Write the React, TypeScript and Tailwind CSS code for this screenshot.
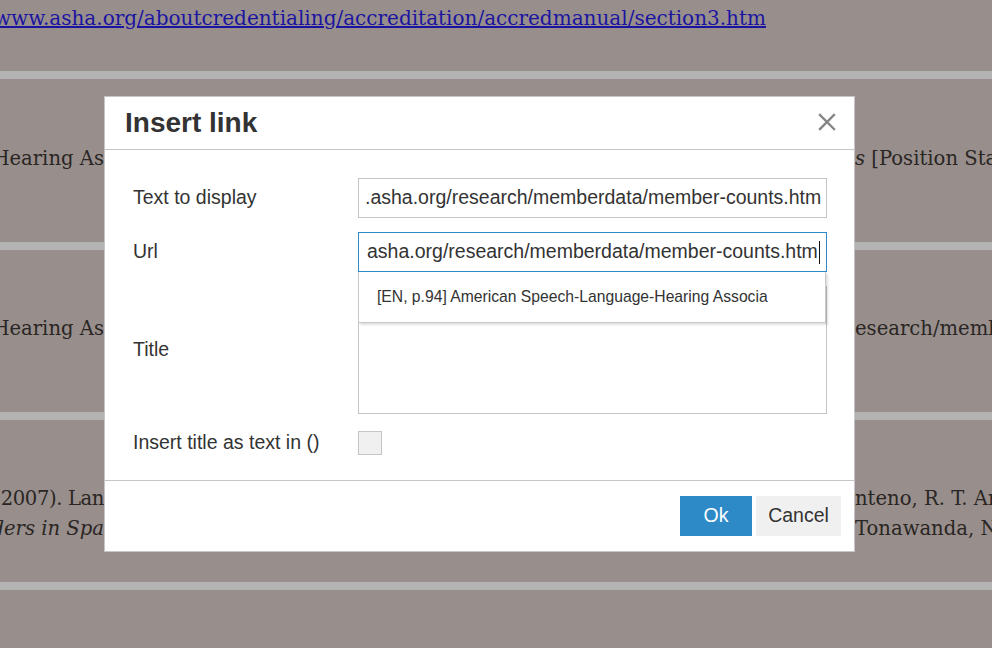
import { ReactNode } from "react";

const serif = { fontFamily: '"DejaVu Serif", "Liberation Serif", serif' };
const sans = { fontFamily: '"Liberation Sans", Arial, sans-serif' };

function Bar() {
  return <div className="h-2 bg-[#b3b3b3]" />;
}

function Line({ left, right }: { left: ReactNode; right: ReactNode }) {
  return (
    <div className="flex h-[30px] items-center whitespace-nowrap leading-[30px]">
      <div className="flex w-[104px] shrink-0 justify-end overflow-hidden">
        <span>{left}</span>
      </div>
      <div className="w-[751px] shrink-0" />
      <div className="min-w-0 overflow-hidden">{right}</div>
    </div>
  );
}

function Page() {
  return (
    <div className="text-[19.6px] text-[#2a2623]" style={serif}>
      <div className="h-[71px] pt-[3px] text-[20px]">
        <div className="flex w-[766px] justify-end overflow-hidden whitespace-nowrap leading-[30px]">
          <span className="text-[#1b14a0] underline">
            http://www.asha.org/aboutcredentialing/accreditation/accredmanual/section3.htm
          </span>
        </div>
      </div>
      <Bar />
      <div className="h-[163px] pt-[65px]">
        <Line
          left="Speech-Language-Hearing As"
          right={
            <>
              <i>s</i> [Position Statement]
            </>
          }
        />
      </div>
      <Bar />
      <div className="h-[162px] pt-[64px]">
        <Line
          left="Speech-Language-Hearing As"
          right="esearch/memberdata/member-counts.htm"
        />
      </div>
      <Bar />
      <div className="h-[162px] pt-[64px]">
        <Line
          left={<span className="tracking-[-0.4px]">Hammer, C. S. (2007). Lan</span>}
          right="nteno, R. T. Anderson"
        />
        <Line
          left={<i>Language Disorders in Spa</i>}
          right="Tonawanda, NY: Multilingual"
        />
      </div>
      <Bar />
    </div>
  );
}

function Field({ label, children }: { label: string; children: ReactNode }) {
  return (
    <div className="flex items-center">
      <div className="w-[225px] shrink-0">{label}</div>
      <div className="min-w-0 flex-1">{children}</div>
    </div>
  );
}

function Dialog() {
  return (
    <div
      className="absolute left-[104px] top-[96px] flex h-[456px] w-[751px] flex-col border border-[#c5c5c5] bg-white text-[#333]"
      style={sans}
    >
      <div className="flex h-[53px] shrink-0 items-center justify-between border-b border-[#c5c5c5] pl-[20px] pr-[18px]">
        <div className="text-[28px] font-bold leading-none">Insert link</div>
        <svg width="18" height="18" viewBox="0 0 18 18" className="mt-[-2px]">
          <path
            d="M2 2 L16 16 M16 2 L2 16"
            stroke="#858585"
            strokeWidth="2.4"
            strokeLinecap="square"
          />
        </svg>
      </div>

      <div className="flex flex-1 flex-col gap-[14px] pl-[28px] pr-[27px] pt-[28px] text-[19.5px]">
        <Field label="Text to display">
          <div className="flex h-[40px] items-center overflow-hidden whitespace-nowrap border border-[#c5c5c5] pl-[6px]">
            .asha.org/research/memberdata/member-counts.htm
          </div>
        </Field>

        <Field label="Url">
          <div className="relative">
            <div className="flex h-[40px] items-center overflow-hidden whitespace-nowrap border border-[#2d8ac7] pl-[8px]">
              asha.org/research/memberdata/member-counts.htm
              <span className="ml-[1px] inline-block h-[23px] w-px bg-[#111]" />
            </div>
            <div className="absolute left-0 top-[40px] z-10 flex h-[51px] w-[468px] items-center border border-t-0 border-[#c8c8c8] bg-white pl-[18px] text-[15.7px] shadow-[2px_2px_2px_rgba(0,0,0,0.12)]">
              [EN, p.94] American Speech-Language-Hearing Associa
            </div>
          </div>
        </Field>

        <Field label="Title">
          <div className="h-[128px] border border-[#c5c5c5]" />
        </Field>

        <Field label="Insert title as text in ()">
          <div className="h-[24px] w-[24px] border border-[#c5c5c5] bg-[#f0f0f0]" />
        </Field>
      </div>

      <div className="flex h-[71px] shrink-0 items-center justify-end gap-[4px] border-t border-[#c5c5c5] pr-[13px] text-[19.5px]">
        <button className="h-[40px] w-[72px] bg-[#2d8ac7] text-white">Ok</button>
        <button className="h-[40px] w-[85px] bg-[#f0f0f0] text-[#333]">
          Cancel
        </button>
      </div>
    </div>
  );
}

export default function App() {
  return (
    <div className="relative h-[648px] w-[992px] overflow-hidden bg-[#988f8d]">
      <Page />
      <Dialog />
    </div>
  );
}
